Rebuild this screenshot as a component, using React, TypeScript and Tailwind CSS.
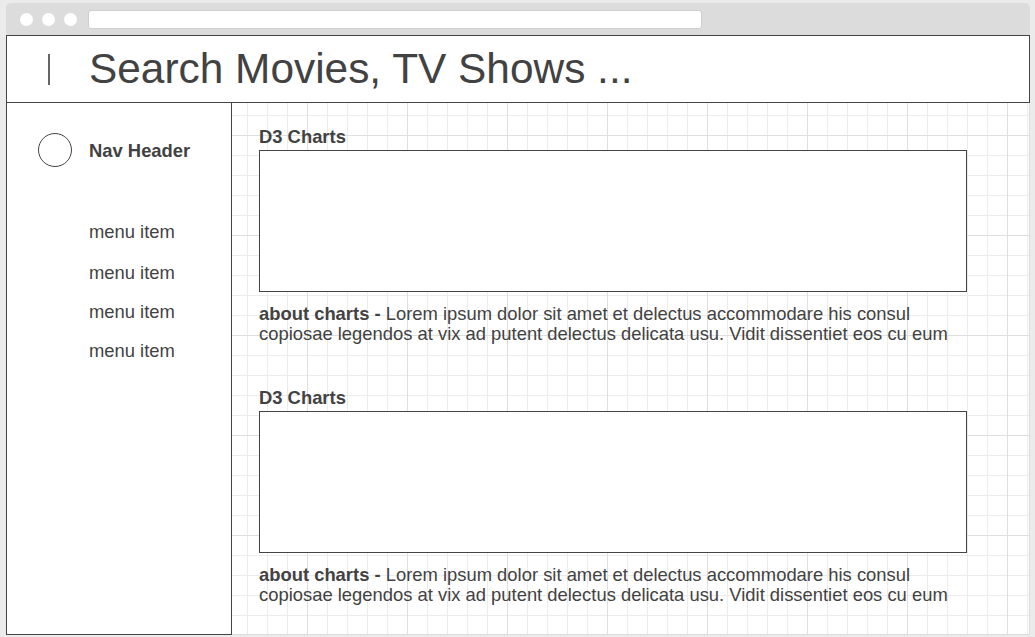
import React from "react";

const gridClass =
  "[background-image:linear-gradient(to_right,#dfdfdf_1px,transparent_1px),linear-gradient(to_bottom,#dfdfdf_1px,transparent_1px),linear-gradient(to_right,#ececec_1px,transparent_1px),linear-gradient(to_bottom,#ececec_1px,transparent_1px)] [background-size:100px_100px,100px_100px,20px_20px,20px_20px] [background-position:75px_32px,75px_32px,15px_12px,15px_12px]";

function ChartSection({ first }: { first?: boolean }) {
  return (
    <div className={first ? "" : "mt-[43px]"}>
      <div className="text-[18.4px] leading-[20px] font-bold pt-[1px]">D3 Charts</div>
      <div className="mt-[3px] h-[142px] border border-[#444] bg-white" />
      <p className="mt-[12px] text-[18.4px] leading-[20px]">
        <span className="font-bold">about charts - </span>
        Lorem ipsum dolor sit amet et delectus accommodare his consul copiosae legendos at vix ad putent delectus delicata usu. Vidit dissentiet eos cu eum
      </p>
    </div>
  );
}

export default function App() {
  return (
    <div
      className="w-[1035px] h-[637px] bg-[#ebebeb] pt-[3px] pl-[6px] text-[#424242] overflow-hidden"
      style={{ fontFamily: '"Liberation Sans", Arial, sans-serif' }}
    >
      <div className="w-[1024px] h-[632px] flex flex-col">
        {/* browser chrome */}
        <div className="h-[32px] bg-[#dcdcdc] rounded-t-[5px] flex items-center pl-[14px]">
          <div className="flex gap-[9px]">
            <div className="w-[13px] h-[13px] rounded-full bg-white" />
            <div className="w-[13px] h-[13px] rounded-full bg-white" />
            <div className="w-[13px] h-[13px] rounded-full bg-white" />
          </div>
          <div className="ml-[11px] w-[614px] h-[19px] bg-white rounded-[3px] border border-[#cfcfcf]" />
        </div>
        {/* header */}
        <div className="h-[68px] border border-[#444] bg-white flex items-center">
          <div className="ml-[41px] w-[2px] h-[31px] bg-[#666]" />
          <div className="ml-[39px] text-[42.4px] leading-[42px]">Search Movies, TV Shows ...</div>
        </div>
        {/* body */}
        <div className="flex flex-1 min-h-0">
          <div className="w-[226px] border-x border-b border-[#444] bg-white pt-[30px] pl-[31px]">
            <div className="flex items-center">
              <div className="w-[34px] h-[34px] rounded-full border border-[#444]" />
              <div className="ml-[17px] text-[18.4px] leading-[20px] font-bold pt-[2px]">Nav Header</div>
            </div>
            <div className="pl-[51px] text-[18.4px] leading-[20px]">
              <div className="mt-[55px]">menu item</div>
              <div className="mt-[21px]">menu item</div>
              <div className="mt-[19px]">menu item</div>
              <div className="mt-[19px]">menu item</div>
            </div>
          </div>
          <div className={`flex-1 bg-white border-r border-b border-[#dcdcdc] pl-[27px] pt-[23px] ${gridClass}`}>
            <div className="w-[708px]">
              <ChartSection first />
              <ChartSection />
            </div>
          </div>
        </div>
      </div>
    </div>
  );
}
